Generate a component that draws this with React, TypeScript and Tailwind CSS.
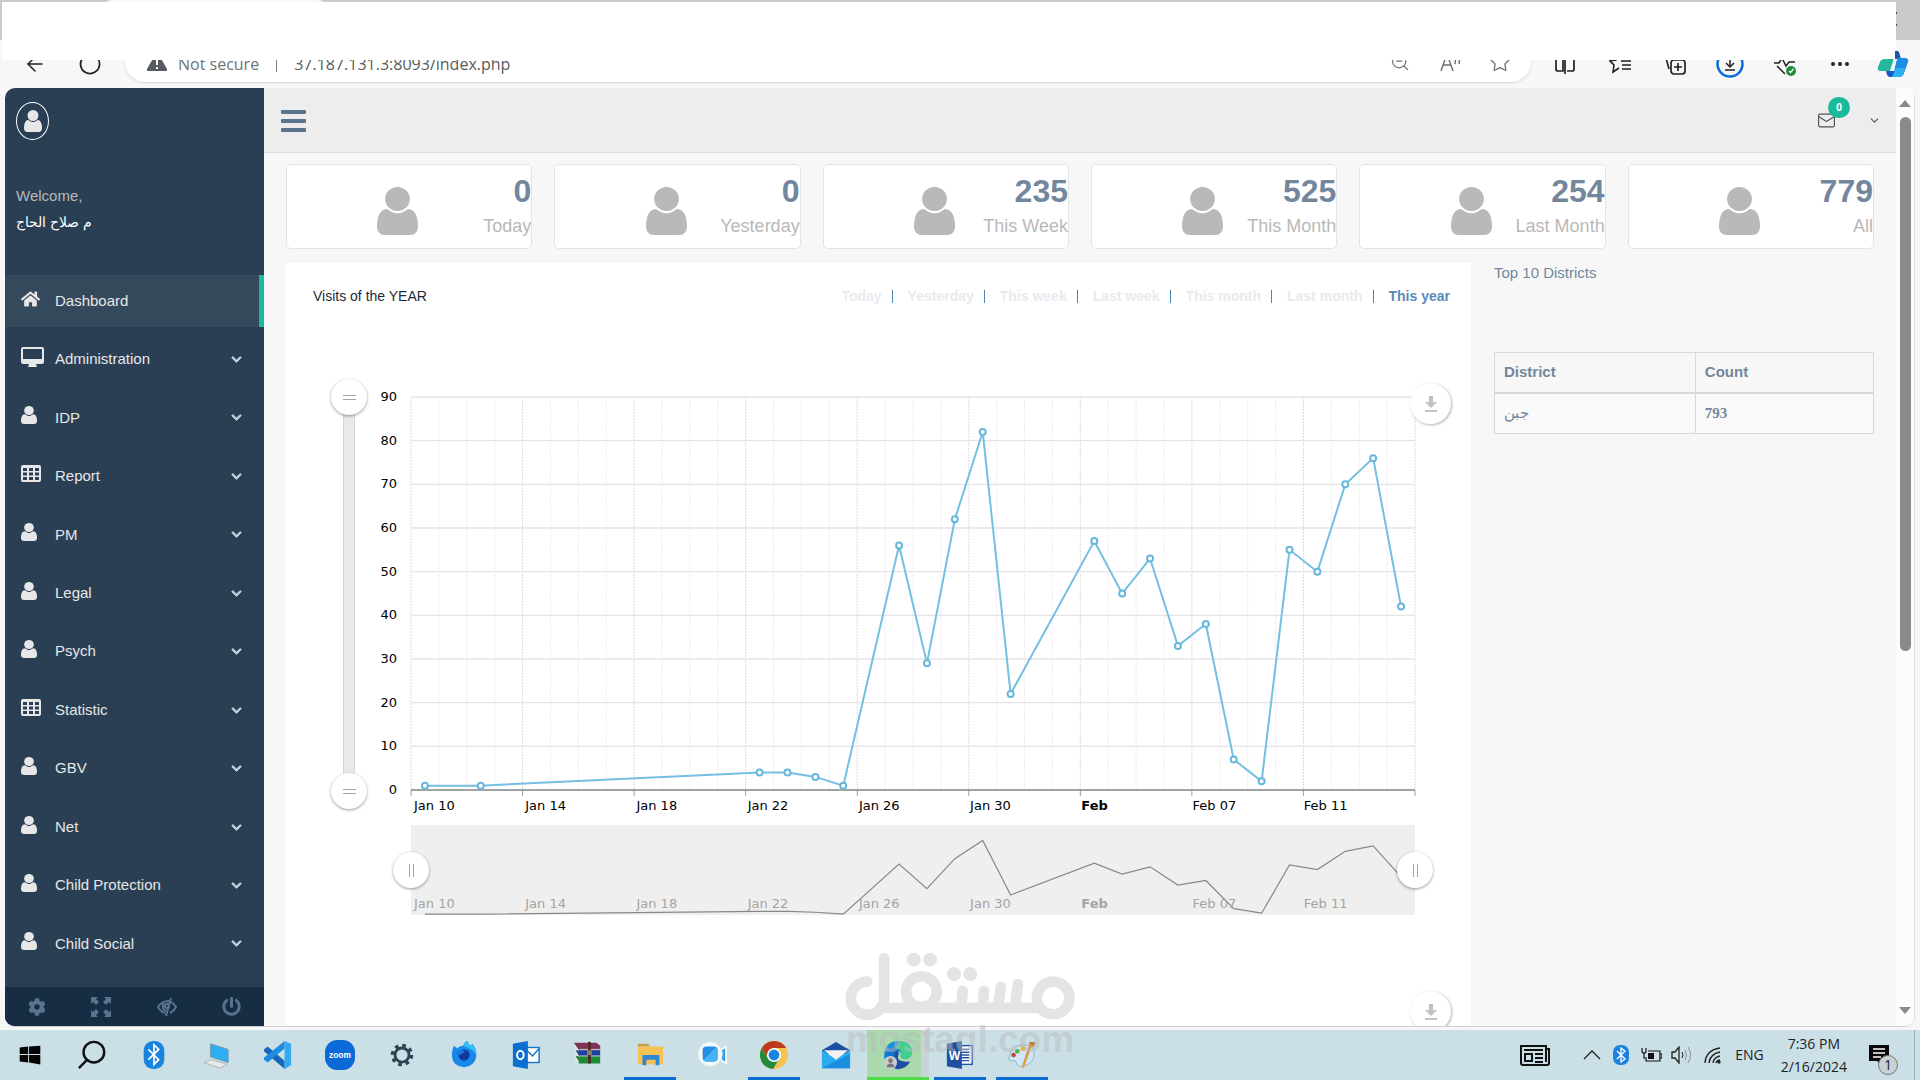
import { ReactNode } from "react";
import { FaChevronDown, FaCog, FaHome, FaPowerOff } from "react-icons/fa";
import { ArrowLeft, ChevronDown, Ellipsis, Mail, Star, ZoomOut } from "lucide-react";

interface MenuItem {
    label: string;
    icon: "home" | "desktop" | "user" | "table";
}

interface Stat {
    value: number;
    label: string;
}

const menu: MenuItem[] = [
    { label: "Dashboard", icon: "home" },
    { label: "Administration", icon: "desktop" },
    { label: "IDP", icon: "user" },
    { label: "Report", icon: "table" },
    { label: "PM", icon: "user" },
    { label: "Legal", icon: "user" },
    { label: "Psych", icon: "user" },
    { label: "Statistic", icon: "table" },
    { label: "GBV", icon: "user" },
    { label: "Net", icon: "user" },
    { label: "Child Protection", icon: "user" },
    { label: "Child Social", icon: "user" },
];

const stats: Stat[] = [
    { value: 0, label: "Today" },
    { value: 0, label: "Yesterday" },
    { value: 235, label: "This Week" },
    { value: 525, label: "This Month" },
    { value: 254, label: "Last Month" },
    { value: 779, label: "All" },
];

const periods = ["Today", "Yesterday", "This week", "Last week", "This month", "Last month", "This year"];

// [day index, visits]
const visits: [number, number][] = [
    [0, 1], [2, 1], [12, 4], [13, 4], [14, 3], [15, 1], [17, 56], [18, 29], [19, 62], [20, 82], [21, 22],
    [24, 57], [25, 45], [26, 53], [27, 33], [28, 38], [29, 7], [30, 2], [31, 55], [32, 50], [33, 70], [34, 76], [35, 42],
];

const yLabels = [90, 80, 70, 60, 50, 40, 30, 20, 10, 0];
const xLabels = ["Jan 10", "Jan 14", "Jan 18", "Jan 22", "Jan 26", "Jan 30", "Feb", "Feb 07", "Feb 11"];

const DAYS = 36;
const PLOT_W = 1004;
const PLOT_H = 393;
const PREVIEW_H = 90;

const dayX = (day: number) => ((day + 0.5) * PLOT_W) / DAYS;
const linePoints = (height: number, max: number) =>
    visits.map(([day, count]) => `${dayX(day)},${height - (count * height) / max}`).join(" ");

function UserIcon({ className }: { className: string }) {
    return (
        <svg className={className} viewBox="0 128 1408 1536" preserveAspectRatio="none" fill="currentColor" aria-hidden="true">
            <path d="M1408 1405q0 120-73 189.500t-194 69.500h-874q-121 0-194-69.500t-73-189.500q0-53 3.500-103.500t14-109 26.500-108.500 43-97.500 62-81 85.500-53.500 111.500-20q9 0 42 21.500t74.500 48 108 48 133.500 21.500 133.500-21.500 108-48 74.500-48 42-21.500q61 0 111.500 20t85.500 53.500 62 81 43 97.500 26.500 108.500 14 109 3.500 103.500z" />
            <ellipse cx="704" cy="512" rx="425" ry="384" />
        </svg>
    );
}

function MenuIcon({ icon }: { icon: MenuItem["icon"] }) {
    if (icon === "home") return <FaHome className="h-[18px] w-[19px]" />;
    if (icon === "user") return <UserIcon className="h-[18px] w-[16px]" />;
    if (icon === "desktop")
        return (
            <svg className="h-[20px] w-[23px]" viewBox="0 0 23 20" fill="currentColor" aria-hidden="true">
                <path fillRule="evenodd" d="M2 0h19q2 0 2 2v13q0 2-2 2h-6l1 3H7l1-3H2q-2 0-2-2V2Q0 0 2 0zM2 2v10h19V2z" />
            </svg>
        );
    return (
        <svg className="h-[17px] w-[20px]" viewBox="0 0 20 17" fill="currentColor" aria-hidden="true">
            <path
                fillRule="evenodd"
                d="M2 0h16q2 0 2 2v13q0 2-2 2H2q-2 0-2-2V2Q0 0 2 0zM2 3v3h4V3zM8 3v3h4V3zM14 3v3h4V3zM2 7.500v3h4v-3zM8 7.500v3h4v-3zM14 7.500v3h4v-3zM2 12v3h4v-3zM8 12v3h4v-3zM14 12v3h4v-3z"
            />
        </svg>
    );
}

function BrowserBar() {
    return (
        <header className="relative shrink-0">
            <div className="h-10 bg-[#cacaca] flex justify-between">
                <div className="ml-[105px] h-full w-[220px] rounded-t-md bg-[#f7f7f7]" />
                <svg className="mr-[22px] mt-3 h-[14px] w-[4px]" viewBox="0 0 4 14" fill="none" stroke="#222" strokeWidth="1.500" aria-hidden="true">
                    <path d="M1 1h2M1 13h2" />
                </svg>
            </div>
            <div className="h-12 bg-[#f7f7f7] flex items-center">
                <button aria-label="Back" className="w-[70px] flex justify-center text-[#222]">
                    <ArrowLeft className="size-6" strokeWidth={1.5} />
                </button>
                <button aria-label="Refresh" className="w-[40px] flex justify-center">
                    <svg className="size-[22px]" viewBox="0 0 22 22" fill="none" stroke="#222" strokeWidth="1.800">
                        <path d="M18 4.500A9.500 9.500 0 1 1 11 1.500M18 0v5h-5" />
                    </svg>
                </button>
                <div className="ml-[15px] -mt-1 h-10 flex-1 flex items-center rounded-full bg-white pl-[22px] pr-[6px] shadow-sm font-['Open_Sans',sans-serif] text-base text-[#6c7474]">
                    <svg className="mr-[11px] h-[18px] w-[20px]" viewBox="0 0 20 18" aria-hidden="true">
                        <path d="M10 0q1 0 1.500 1L20 16q.5 2-1 2H1q-1.500 0-1-2L8.500 1Q9 0 10 0z" fill="#555b60" />
                        <path d="M10 6v6M10 14v2" stroke="#fff" strokeWidth="2" />
                    </svg>
                    <span className="pt-1">Not secure</span>
                    <span className="mx-[17px] h-5 w-px bg-[#7a8288]" />
                    <label htmlFor="address" className="sr-only">Address</label>
                    <input
                        id="address"
                        className="flex-1 min-w-0 pt-1 bg-transparent text-[#555c58] outline-none"
                        defaultValue="37.187.131.3:8093/index.php"
                    />
                    <button aria-label="Zoom" className="w-[50px] flex justify-center">
                        <ZoomOut className="size-5" strokeWidth={1.5} />
                    </button>
                    <button aria-label="Read aloud" className="w-[50px] flex justify-center">
                        <svg className="size-[22px]" viewBox="0 0 22 22" fill="none" stroke="currentColor" strokeWidth="1.500">
                            <path d="M2 20L8 3l6 17M4 14h8M16 6q1 3 0 7M20 5q1 4 0 8" />
                        </svg>
                    </button>
                    <button aria-label="Favourite" className="w-[50px] flex justify-center">
                        <Star className="size-[22px]" strokeWidth={1.5} />
                    </button>
                </div>
                <div className="ml-[6px] flex shrink-0 items-center text-[#222]">
                    <button aria-label="Split screen" className="w-[55px] flex justify-center">
                        <svg className="size-5" viewBox="0 0 20 20" fill="none" stroke="currentColor" strokeWidth="1.700">
                            <path d="M8 17H3q-2 0-2-2V3h7zM12 3h5q2 0 2 2v10q0 2-2 2h-5M10 1v19" />
                        </svg>
                    </button>
                    <button aria-label="Favourites" className="w-[55px] flex justify-center">
                        <svg className="size-[22px]" viewBox="0 0 22 22" fill="none" stroke="currentColor" strokeWidth="1.600">
                            <path d="M11 6L9 2 7 7 1 8l4 4-1 7 6-4M12 8h10M13 12h9M13 16h9" />
                        </svg>
                    </button>
                    <button aria-label="Collections" className="w-[55px] flex justify-center">
                        <svg className="size-[22px]" viewBox="0 0 22 22" fill="none" stroke="currentColor" strokeWidth="1.700">
                            <rect x="7" y="7" width="14" height="14" rx="3" />
                            <path d="M14 10v8M10 14h8M5 16L2 5q0-3 3-3l10-1" />
                        </svg>
                    </button>
                    <button aria-label="Downloads" className="w-[55px] flex justify-center">
                        <svg className="size-[28px]" viewBox="0 0 28 28" fill="none">
                            <circle cx="14" cy="14" r="12.500" stroke="#0a6ddb" strokeWidth="2.500" />
                            <path d="M14 6v11M10 13l4 4 4-4M9 20h10" stroke="#222" strokeWidth="1.500" />
                        </svg>
                    </button>
                    <button aria-label="Browser essentials" className="w-[55px] flex justify-center">
                        <svg className="size-[24px]" viewBox="0 0 24 24" fill="none">
                            <path d="M1 11h5l3-5 4 8 3-4h6M4 14l8 8M4 7q3-6 8-1 5-5 9 1" stroke="#222" strokeWidth="1.500" />
                            <circle cx="18" cy="19" r="5" fill="#1f8b3a" />
                            <path d="M16 19l1.500 1.500L20.500 17" stroke="#fff" strokeWidth="1.300" />
                        </svg>
                    </button>
                    <button aria-label="Settings and more" className="w-[55px] flex justify-center">
                        <Ellipsis className="size-6" />
                    </button>
                </div>
                <div className="w-[53px]" />
            </div>
            {/* cover strip hiding the tabs */}
            <div className="absolute left-[2px] right-6 top-[2px] h-[58px] bg-white" />
            <button aria-label="Copilot" className="absolute right-[11px] top-[48px]">
                <svg className="h-[30px] w-[32px]" viewBox="0 0 32 30">
                    <path d="M18 3q2-1 4 1l2 7h-6z" fill="#1c54b2" />
                    <path d="M8 11h9l-4 12H4q-4 0-3-4l2-5q1-3 5-3z" fill="#24b79b" />
                    <path d="M20 10h8q4 0 3 4l-4 11q-1 4-5 4h-6z" fill="#1a8ce8" />
                    <path d="M9 23h14l-2 4q-1 2-4 2h-4q-3 0-4-6z" fill="#1559c9" />
                    <path d="M15 29l4-9h9l-2 6q-1 3-4 3z" fill="#2ab2f3" />
                    <path d="M17 11l-4 12h3l4-12z" fill="#f7f7f7" />
                </svg>
            </button>
        </header>
    );
}

function Sidebar() {
    return (
        <aside className="w-[259px] shrink-0 flex flex-col bg-[#2a3f54] text-[#e7e7e7]">
            <div className="px-[11px] pt-[14px] pb-[42px]">
                <div className="flex h-[38px] w-[33px] items-center justify-center rounded-[50%] border border-white">
                    <UserIcon className="h-[22px] w-[18px]" />
                </div>
                <p className="mt-[46px] text-[15px] leading-[20px] text-[#bab8b8]">Welcome,</p>
                <p className="mt-[5px] text-sm leading-[22px] text-white">م صلاح الحاج</p>
            </div>
            <nav className="flex-1 flex flex-col justify-between pb-[17px]">
                {menu.map((item) => (
                    <a
                        key={item.label}
                        href="#"
                        className={
                            item.label === "Dashboard"
                                ? "flex h-[52px] items-center border-r-[5px] border-[#1abb9c] bg-[#35495d] pl-4 text-[15px]"
                                : "flex h-[52px] items-center pl-4 pr-[22px] text-[15px]"
                        }
                    >
                        <span className="w-[34px] pb-[5px]">
                            <MenuIcon icon={item.icon} />
                        </span>
                        <span className="flex-1">{item.label}</span>
                        {item.label !== "Dashboard" && (
                            <FaChevronDown className="size-[11px] text-[#c4cfda]" stroke="currentColor" strokeWidth={40} />
                        )}
                    </a>
                ))}
            </nav>
            <div className="flex h-[39px] items-center justify-around bg-[#172d44] text-[#5a738e]">
                <button aria-label="Settings"><FaCog className="size-[18px]" /></button>
                <button aria-label="FullScreen">
                    <svg className="size-[20px]" viewBox="0 0 20 20" fill="currentColor">
                        <path d="M0 0h7L5 2l3 3-3 3-3-3-2 2zM20 0v7l-2-2-3 3-3-3 3-3-2-2zM0 20v-7l2 2 3-3 3 3-3 3 2 2zM20 20h-7l2-2-3-3 3-3 3 3 2-2z" />
                    </svg>
                </button>
                <button aria-label="Lock">
                    <svg className="size-[20px]" viewBox="0 0 20 20" fill="none" stroke="currentColor" strokeWidth="2">
                        <path d="M8 16Q4 15 1 10q4-6 11-6M14 5q3 2 5 5-2 4-6 6M14 1L9 19M7 6q-3 6 2 8" />
                        <circle cx="10" cy="9" r="2" />
                    </svg>
                </button>
                <button aria-label="Logout"><FaPowerOff className="size-[19px]" /></button>
            </div>
        </aside>
    );
}

function DownloadButton({ className }: { className: string }) {
    return (
        <button
            aria-label="Download"
            className={`flex size-[41px] items-center justify-center rounded-full bg-white shadow-[1px_1px_3px_rgba(0,0,0,0.3)] ${className}`}
        >
            <svg className="h-[16px] w-[12px]" viewBox="0 0 12 16" fill="#c2c2c2">
                <path d="M4 0h4v6h4l-6 6-6-6h4zM0 14h12v2H0z" />
            </svg>
        </button>
    );
}

function Handle({ className, vertical }: { className: string; vertical?: boolean }) {
    return (
        <button
            aria-label="Zoom handle"
            className={`absolute flex size-9 items-center justify-center rounded-full bg-white shadow-[0_1px_3px_rgba(0,0,0,0.4)] ${className}`}
        >
            <span className={vertical ? "h-[5px] w-[13px] border-y border-[#a5a5a5]" : "h-[13px] w-[5px] border-x border-[#a5a5a5]"} />
        </button>
    );
}

function VisitsChart() {
    return (
        <div className="relative pl-[45px] pr-[56px] font-['DejaVu_Sans',sans-serif] text-[13px] leading-4 text-black">
            <div className="flex">
                {/* vertical zoom */}
                <div className="relative flex w-9 justify-center">
                    <div className="w-3 border-x border-[#d6d6d6] bg-[#e9e9e9]" />
                    <Handle vertical className="-top-[18px]" />
                    <Handle vertical className="-bottom-[19px]" />
                </div>
                <div className="-my-2 flex w-[30px] flex-col justify-between text-right">
                    {yLabels.map((label) => (
                        <span key={label}>{label}</span>
                    ))}
                </div>
                <svg className="ml-[14px] min-w-0 flex-1 overflow-visible" viewBox={`0 0 ${PLOT_W} ${PLOT_H}`}>
                    {Array.from({ length: DAYS + 1 }, (_, i) => (
                        <line
                            key={i}
                            x1={(i * PLOT_W) / DAYS}
                            x2={(i * PLOT_W) / DAYS}
                            y1={0}
                            y2={PLOT_H}
                            stroke={i % 4 === 0 ? "#dcdcdc" : "#ececec"}
                            strokeDasharray="2 1"
                        />
                    ))}
                    {yLabels.slice(0, -1).map((label) => (
                        <line
                            key={label}
                            x1={0}
                            x2={PLOT_W}
                            y1={PLOT_H - (label * PLOT_H) / 90}
                            y2={PLOT_H - (label * PLOT_H) / 90}
                            stroke="#e4e4e4"
                            strokeWidth={1.4}
                        />
                    ))}
                    {Array.from({ length: 10 }, (_, i) => (
                        <line key={i} x1={(i * PLOT_W) / 9} x2={(i * PLOT_W) / 9} y1={PLOT_H} y2={PLOT_H + 6} stroke="#a0a0a0" />
                    ))}
                    <line x1={0} x2={PLOT_W} y1={PLOT_H} y2={PLOT_H} stroke="#808585" strokeWidth={1.4} />
                    <polyline points={linePoints(PLOT_H, 90)} fill="none" stroke="#74bfe2" strokeWidth={2} />
                    {visits.map(([day, count]) => (
                        <circle
                            key={day}
                            cx={dayX(day)}
                            cy={PLOT_H - (count * PLOT_H) / 90}
                            r={3}
                            fill="#fff"
                            stroke="#67b7dc"
                            strokeWidth={2}
                        />
                    ))}
                </svg>
            </div>
            <div className="ml-20 mt-2 grid grid-cols-9 pl-[3px]">
                {xLabels.map((label) => (
                    <span key={label} className={label === "Feb" ? "font-bold" : ""}>{label}</span>
                ))}
            </div>
            {/* horizontal zoom with preview */}
            <div className="relative ml-20 mt-[11px] bg-[#efefef]">
                <svg className="w-full" viewBox={`0 0 ${PLOT_W} ${PREVIEW_H}`}>
                    <polyline points={linePoints(PREVIEW_H, 99)} fill="none" stroke="#888" strokeWidth={1.2} />
                </svg>
                <div className="absolute inset-x-0 bottom-[3px] grid grid-cols-9 pl-[3px] text-[#a4a4a4]">
                    {xLabels.map((label) => (
                        <span key={label} className={label === "Feb" ? "font-bold" : ""}>{label}</span>
                    ))}
                </div>
                <Handle className="-left-[18px] top-[27px]" />
                <Handle className="-right-[18px] top-[27px]" />
            </div>
            <DownloadButton className="absolute right-[20px] -top-[14px]" />
        </div>
    );
}

function Dashboard() {
    return (
        <div className="flex min-w-0 flex-1 flex-col bg-[#f7f7f7]">
            <div className="flex h-[65px] shrink-0 items-center justify-between border-b border-[#d9dee4] bg-[#ededed] pl-[17px] pr-[15px] pt-px text-[#515356]">
                <button aria-label="Toggle menu" className="flex flex-col gap-[5px]">
                    <span className="h-[4px] w-[25px] rounded-[1px] bg-[#5a738e]" />
                    <span className="h-[4px] w-[25px] rounded-[1px] bg-[#5a738e]" />
                    <span className="h-[4px] w-[25px] rounded-[1px] bg-[#5a738e]" />
                </button>
                <div className="flex items-center">
                    <button aria-label="Messages" className="relative mr-[32px]">
                        <Mail className="size-[19px]" strokeWidth={1.5} />
                        <span className="absolute -right-[14px] -top-[14px] flex h-[21px] w-[22px] items-center justify-center rounded-full bg-[#1abb9c] text-[11px] font-bold text-white">
                            0
                        </span>
                    </button>
                    <button aria-label="Account"><ChevronDown className="size-[13px]" /></button>
                </div>
            </div>
            <main className="flex min-h-0 flex-1 flex-col overflow-hidden pl-[22px] pr-[22px] pt-[11px]">
                <div className="grid grid-cols-6 gap-[22px]">
                    {stats.map((stat) => (
                        <div key={stat.label} className="relative h-[85px] rounded-[5px] border border-[#e4e4e4] bg-white text-right">
                            <div className="absolute left-[37%] top-[22px] text-[#bab8b8]">
                                <UserIcon className="h-[48px] w-[41px]" />
                            </div>
                            <p className="pt-[8px] text-[32px] font-bold leading-9 text-[#73879c]">{stat.value}</p>
                            <p className="mt-[5px] text-lg leading-6 text-[#bab8b8]">{stat.label}</p>
                        </div>
                    ))}
                </div>
                <div className="mt-[14px] flex min-h-0 flex-1 gap-[23px]">
                    <section className="relative flex-1 overflow-hidden bg-white">
                        <div className="flex items-center justify-between pl-[27px] pr-[21px] pt-[23px] text-sm">
                            <h2 className="text-[#1c2b3a]">Visits of the YEAR</h2>
                            <div className="flex items-center font-bold">
                                {periods.map((period) => (
                                    <div key={period} className="flex items-center">
                                        <a href="#" className={period === "This year" ? "text-[#5a8ab8]" : "text-[#e7ebef]"}>
                                            {period}
                                        </a>
                                        {period !== "This year" && <span className="ml-[10px] mr-[15px] h-[13px] w-px bg-[#4a86b8]" />}
                                    </div>
                                ))}
                            </div>
                        </div>
                        <div className="mt-[91px]">
                            <VisitsChart />
                        </div>
                        <DownloadButton className="ml-auto mr-[20px] mt-[76px]" />
                    </section>
                    <aside className="w-[380px] text-[#73879c]">
                        <h2 className="text-[15px] leading-5">Top 10 Districts</h2>
                        <table className="mt-[69px] w-full border-collapse border border-[#d9d9d9] text-left text-[15px]">
                            <thead>
                                <tr className="h-[40px]">
                                    <th className="w-[53%] border border-b-2 border-[#d9d9d9] px-[9px]">District</th>
                                    <th className="border border-b-2 border-[#d9d9d9] px-[9px]">Count</th>
                                </tr>
                            </thead>
                            <tbody>
                                <tr className="h-[41px] bg-[#f9f9f9] font-['Liberation_Serif',serif]">
                                    <td className="border border-[#d9d9d9] px-[9px]">جبن</td>
                                    <td className="border border-[#d9d9d9] px-[9px] font-bold">793</td>
                                </tr>
                            </tbody>
                        </table>
                    </aside>
                </div>
            </main>
        </div>
    );
}

const apps: { name: string; open?: boolean; icon: ReactNode }[] = [
    { name: "Start", icon: <path d="M5 8l9-1v8H5zM15 7l12-1v9H15zM5 16h9v8l-9-1zM15 16h12v10l-12-2z" fill="#050505" /> },
    {
        name: "Search",
        icon: <g fill="none" stroke="#111" strokeWidth="2.600"><circle cx="18" cy="13" r="11" /><path d="M11 21l-9 9" /></g>,
    },
    {
        name: "Bluetooth",
        icon: (
            <>
                <rect x="5" y="1" width="22" height="30" rx="10" fill="#1a84dc" />
                <path d="M10 10l11 11-5 5V5l5 5-11 11" fill="none" stroke="#fff" strokeWidth="1.800" />
            </>
        ),
    },
    {
        name: "This PC",
        icon: (
            <>
                <path d="M10 4l19 6v14l-19-6z" fill="#2caef0" stroke="#7d98a5" />
                <path d="M3 24l8-3 17 5-8 4z" fill="#e8eaea" stroke="#aab3b6" />
            </>
        ),
    },
    {
        name: "VS Code",
        icon: (
            <>
                <path d="M1 10l4-3 18 15v9L1 12z" fill="#1469bb" />
                <path d="M1 21l4 3L23 9V1L1 19z" fill="#1d8be0" />
                <path d="M23 1l7 3v23l-7 4z" fill="#35a9ef" />
            </>
        ),
    },
    {
        name: "Zoom",
        icon: (
            <>
                <rect x="0" y="0" width="32" height="32" rx="13" fill="#0b6ad8" />
                <text x="16" y="19" textAnchor="middle" fontSize="9" fontWeight="700" fill="#fff">zoom</text>
            </>
        ),
    },
    {
        name: "Settings",
        icon: (
            <g fill="none" stroke="#2f4352">
                <circle cx="16" cy="16" r="7.500" strokeWidth="3" />
                <circle cx="16" cy="16" r="10" strokeWidth="4" strokeDasharray="3.800 4.050" />
            </g>
        ),
    },
    {
        name: "Firefox",
        icon: (
            <>
                <path d="M5 6l4 3q2-3 6-3 2-5 5-5 0 3 3 5l2-2q5 6 4 14-2 10-13 11Q4 28 3 17q0-6 2-11z" fill="#1688ea" />
                <path d="M15 6q2-5 5-5 0 3 3 5l2-2q5 6 4 12-4-7-14-10z" fill="#34bdf4" />
                <circle cx="16" cy="16" r="6" fill="#12389b" />
                <path d="M8 12q6-3 9 1-4 1-4 3l-5-1z" fill="#1c78da" />
            </>
        ),
    },
    {
        name: "Outlook",
        icon: (
            <>
                <rect x="15" y="8" width="15" height="16" fill="#fff" stroke="#1572cf" strokeWidth="1.500" />
                <path d="M15 9l8 8 7-8" fill="none" stroke="#1572cf" strokeWidth="1.500" />
                <path d="M2 4l16-3v30L2 28z" fill="#0a6fd0" />
                <ellipse cx="10" cy="16" rx="3.500" ry="4.500" fill="none" stroke="#fff" strokeWidth="2.200" />
            </>
        ),
    },
    {
        name: "WinRAR",
        icon: (
            <>
                <path d="M1 3h24l4 3v5H6z" fill="#7c3455" />
                <path d="M3 11h26v6H6z" fill="#1f3f9e" />
                <path d="M3 17h26v8H6z" fill="#1f8a38" />
                <path d="M2 5l4 5v2L2 8zM2 11l4 5v2l-4-4zM2 17l4 5v3l-4-4z" fill="#e6e6e6" />
                <path d="M7 10h22M7 17h22" stroke="#d5d5d5" />
                <rect x="16" y="2" width="3" height="23" fill="#512a24" />
                <rect x="15" y="11" width="5" height="5" fill="#8d8468" />
            </>
        ),
    },
    {
        name: "File Explorer",
        open: true,
        icon: (
            <>
                <path d="M3 4h11l2 3H3z" fill="#c89a4a" />
                <path d="M3 7h27v19H3z" fill="#f7c255" />
                <path d="M8 27V16h18v11h-4v-6h-10v6z" fill="#2e87d6" />
            </>
        ),
    },
    {
        name: "Meet",
        icon: (
            <>
                <path d="M24 12l7-5v18l-7-5z" fill="#2d9de8" stroke="#f3f7f8" strokeWidth="2" />
                <circle cx="14" cy="15" r="13" fill="#f5f8f9" stroke="#dde6e9" />
                <rect x="6" y="7" width="16" height="16" rx="4" fill="#238fe4" />
                <path d="M7 21L20 8q2 1 2 3v8q0 4-4 4H9z" fill="#45b2f3" />
            </>
        ),
    },
    {
        name: "Chrome",
        open: true,
        icon: (
            <>
                <circle cx="16" cy="16" r="15" fill="#f6c353" />
                <path d="M3 8.500A15 15 0 0 1 29 8.500H16L9 18z" fill="#bd3b1c" />
                <path d="M3 8.500A15 15 0 0 0 15 31l7-12-13 0z" fill="#228a3a" />
                <circle cx="16" cy="16" r="7.500" fill="#fff" />
                <circle cx="16" cy="16" r="5.800" fill="#1a84e2" />
            </>
        ),
    },
    {
        name: "Mail",
        icon: (
            <>
                <path d="M1 11L16 2l15 9v4H1z" fill="#1c4fa0" />
                <path d="M1 11l15 9 15-9v19H1z" fill="#2cadf0" />
                <path d="M1 30L31 15v15z" fill="#1b8ee2" />
                <path d="M3 11h26l-13 10z" fill="#f2f2f2" />
            </>
        ),
    },
    {
        name: "Edge",
        open: true,
        icon: (
            <>
                <path d="M1 17Q2 1 17 1q13 1 14 12-1 8-9 7-4-1-3-4 1-4-5-4-9 0-9 11-4-2-4-6z" fill="#1c8fd8" />
                <path d="M18 1q13 2 13 12-1 7-8 7-5 0-4-4 2-7-6-7 3-3 5-8z" fill="#3fd08a" />
                <path d="M7 10q8-6 10 5-5 9 12 8-5 9-15 8-9-3-9-12z" fill="#1b4da5" />
                <path d="M4 12q6-6 13-2-7 3-4 12L2 20z" fill="#1573d2" />
                <circle cx="8" cy="24" r="7" fill="#c7ccd0" />
                <circle cx="8" cy="22" r="2.500" fill="#777" />
                <path d="M4 29q0-4 4-4t4 4z" fill="#777" />
            </>
        ),
    },
    {
        name: "Word",
        open: true,
        icon: (
            <>
                <rect x="15" y="6" width="14" height="20" fill="#fff" stroke="#1e55a5" strokeWidth="1.500" />
                <path d="M18 10h8M18 13h8M18 16h8M18 19h8M18 22h8" stroke="#1e55a5" strokeWidth="1.500" />
                <path d="M2 4l16-3v30L2 28z" fill="#1f4f9f" />
                <text x="10" y="21" textAnchor="middle" fontSize="13" fontWeight="700" fill="#fff">W</text>
            </>
        ),
    },
    {
        name: "Paint",
        open: true,
        icon: (
            <>
                <path d="M2 19Q4 7 17 5q12 0 12 9 0 13-14 14-5 0-5-4-1-3-4-2-4 1-4-3z" fill="#cfe7f6" stroke="#8fb3c9" />
                <circle cx="7" cy="16" r="2.500" fill="#c5482d" />
                <circle cx="11" cy="12" r="2.500" fill="#4cb84a" />
                <circle cx="17" cy="9" r="2.800" fill="#f0b43a" />
                <path d="M27 5l-9 24-2 1 1-5 7-21z" fill="#e0983b" />
                <path d="M23 2l8 0-3 6z" fill="#bd7d40" />
            </>
        ),
    },
];

function Taskbar() {
    return (
        <footer className="flex h-[50px] shrink-0 items-stretch bg-[#cbe0e6] font-['Open_Sans',sans-serif] text-sm text-[#1c2426]">
            <div className="-ml-px flex">
                {apps.map((app) => (
                    <button
                        key={app.name}
                        aria-label={app.name}
                        className={
                            app.name === "Edge"
                                ? "relative flex w-[62px] items-center justify-center border-r-8 border-[#c9d4d4] bg-[#a9d9ac] pl-2"
                                : "relative flex w-[62px] items-center justify-center"
                        }
                    >
                        <svg className="size-[30px] font-['Liberation_Sans',sans-serif]" viewBox="0 0 32 32">{app.icon}</svg>
                        {app.open && (
                            <span
                                className={
                                    app.name === "Edge"
                                        ? "absolute bottom-0 left-0 -right-2 h-[3px] bg-[#4ddc45]"
                                        : "absolute inset-x-[5px] bottom-0 h-[3px] bg-[#0b6cd0]"
                                }
                            />
                        )}
                    </button>
                ))}
            </div>
            <div className="ml-auto flex items-center">
                <button aria-label="News" className="mr-[33px]">
                    <svg className="h-[21px] w-[30px]" viewBox="0 0 30 21" fill="none" stroke="#111" strokeWidth="2">
                        <path d="M26 4V1H1v17q0 2 2 2h24q2 0 2-2V4h-3v13M4 5h19M15 9h8M15 13h8M15 17h8" />
                        <rect x="5" y="9" width="7" height="7" />
                    </svg>
                </button>
                <button aria-label="Hidden icons" className="mr-[12px]">
                    <svg className="h-[10px] w-[18px]" viewBox="0 0 18 10" fill="none" stroke="#222" strokeWidth="1.400">
                        <path d="M1 9l8-8 8 8" />
                    </svg>
                </button>
                <svg className="mr-[12px] h-[20px] w-[16px]" viewBox="0 0 16 20" aria-hidden="true">
                    <rect width="16" height="20" rx="7" fill="#1a84dc" />
                    <path d="M4 6l8 8-4 3V3l4 3-8 8" fill="none" stroke="#fff" strokeWidth="1.300" />
                </svg>
                <svg className="mr-[9px] h-[14px] w-[21px]" viewBox="0 0 21 14" aria-hidden="true">
                    <path d="M7 3h12v10H5V9M19 6h2v4h-2M1 0v3q0 2 2 2t2-2V0M3 5v6" fill="none" stroke="#111" strokeWidth="1.200" />
                    <path d="M7 5h6v6H7z" fill="#111" />
                </svg>
                <svg className="mr-[12px] h-[18px] w-[21px]" viewBox="0 0 21 18" fill="none" stroke="#222" aria-hidden="true">
                    <path d="M1 6h3l4-5v16l-4-5H1z" strokeWidth="1.300" />
                    <path d="M11 6q2 3 0 6" />
                    <path d="M14 4q3 5 0 10M17 1q5 8 0 16" stroke="#849298" />
                </svg>
                <svg className="mr-[14px] h-[17px] w-[17px]" viewBox="0 0 17 17" fill="none" stroke="#222" strokeWidth="1.400" aria-hidden="true">
                    <path d="M1 16Q2 3 16 1M5 16Q6 7 16 5M9 16q1-6 7-7M12 16q1-3 4-3" />
                    <circle cx="15" cy="15" r="1" fill="#222" />
                </svg>
                <span className="mr-[17px]">ENG</span>
                <time className="mr-[22px] text-center leading-[23px]" dateTime="2024-02-16T19:36">
                    7:36 PM
                    <br />
                    2/16/2024
                </time>
                <button aria-label="Notifications" className="relative mr-[25px]">
                    <svg className="h-[21px] w-[20px]" viewBox="0 0 20 21">
                        <path d="M0 0h20v16h-6v5l-6-5H0z" fill="#0a0a0a" />
                        <path d="M4 4h12M4 8h12M4 12h8" stroke="#fff" strokeWidth="1.300" />
                    </svg>
                    <span className="absolute -right-[9px] top-[10px] flex size-5 items-center justify-center rounded-full border border-[#777] bg-[#c9d1d4]">
                        1
                    </span>
                </button>
                <span className="mr-[5px] h-[50px] w-px bg-[#9fb0b6]" />
            </div>
        </footer>
    );
}

function Watermark() {
    return (
        <div className="pointer-events-none absolute bottom-[22px] left-1/2 w-[233px] -translate-x-1/2 text-center">
            <svg className="w-full" viewBox="130 94 700 210" fill="none" stroke="#e4e4e4" strokeWidth="32" strokeLinecap="round" role="img" aria-label="مستقل">
                <path d="M252 112v120a50 50 0 1 1-51-49" />
                <path d="M240 262H720M488 211l-4 45M552 211l-4 45M603 199l-8 56M654 191l-9 64" />
                <circle cx="364" cy="213" r="46" />
                <circle cx="760" cy="232" r="49" />
                <g fill="#e4e4e4" stroke="none">
                    <circle cx="341" cy="117" r="21" />
                    <circle cx="390" cy="117" r="21" />
                    <circle cx="462" cy="160" r="21" />
                    <circle cx="511" cy="160" r="21" />
                </g>
            </svg>
            <p className="text-[37px] font-bold leading-9 text-[#b8bcbe]/50">mostaql.com</p>
        </div>
    );
}

export default function App() {
    return (
        <div className="relative flex h-screen flex-col overflow-hidden bg-[#f7f7f7] font-['Liberation_Sans',Arial,sans-serif]">
            <BrowserBar />
            <div className="mb-[3px] ml-[5px] mr-[5px] flex min-h-0 flex-1 overflow-hidden rounded-[10px] border-b border-[#cfcfcf]">
                <Sidebar />
                <Dashboard />
                <div className="flex w-[19px] shrink-0 flex-col items-center border-r border-[#e0e0e0] bg-[#fcfcfc] pb-[12px] pt-[12px]">
                    <span className="border-x-[6px] border-b-[7px] border-x-transparent border-b-[#8a8a8a]" />
                    <div className="mt-[10px] w-[11px] flex-1">
                        <div className="h-[60%] rounded-full bg-[#8a8a8a]" />
                    </div>
                    <span className="border-x-[6px] border-t-[7px] border-x-transparent border-t-[#8a8a8a]" />
                </div>
            </div>
            <Taskbar />
            <Watermark />
        </div>
    );
}
